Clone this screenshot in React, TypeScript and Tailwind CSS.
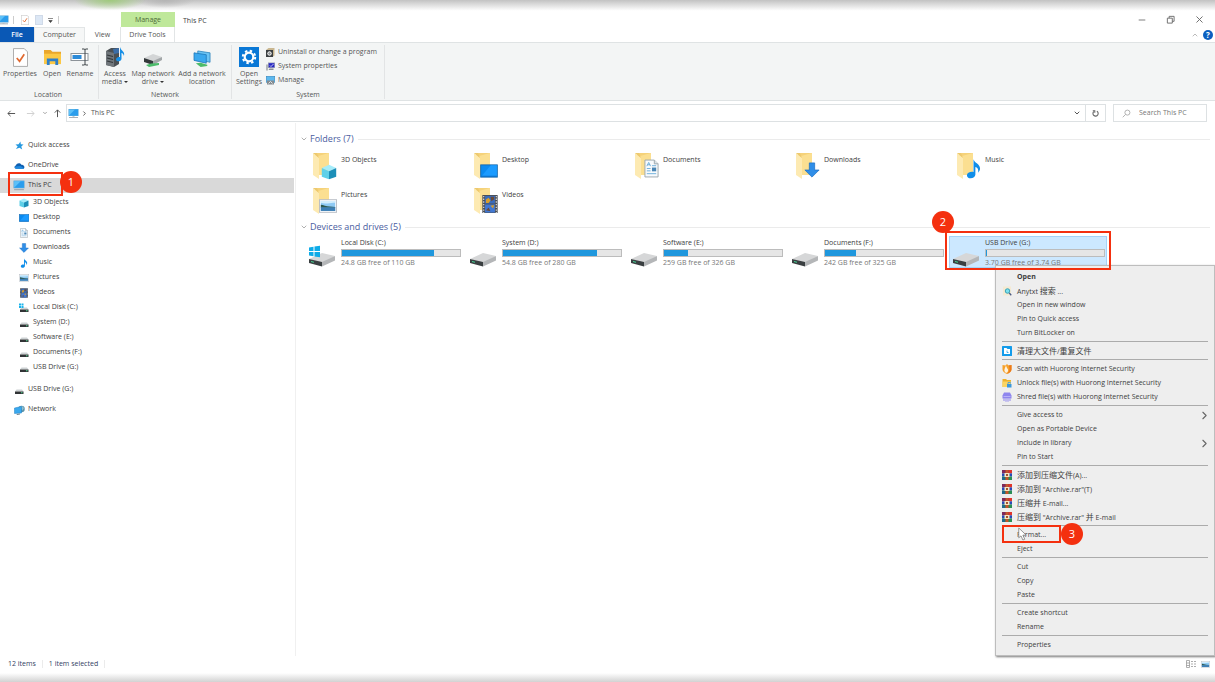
import type { ReactNode } from 'react';
import clsx from 'clsx';
import { ChevronDown, ChevronRight, ChevronUp, Minus, X } from 'lucide-react';

type IconName =
  | 'pc' | 'star' | 'cloud' | 'cube' | 'desktop' | 'document' | 'download' | 'music'
  | 'picture' | 'video' | 'osdrive' | 'drive' | 'network';

interface IconProps {
  className?: string;
}

function PcIcon({ className }: IconProps) {
  return (
    <svg viewBox="0 0 22 20" className={className} aria-hidden="true">
      <rect x="1" y="1" width="20" height="14" fill="#4b9fd6" />
      <rect x="2" y="2" width="18" height="12" fill="#5cc0f8" />
      <path d="M2 14 L14 2 H20 V14z" fill="#2b9dec" />
      <rect x="9" y="15" width="4" height="2" fill="#c3ccd2" />
      <rect x="2" y="17" width="18" height="1.500" fill="#8896a2" />
    </svg>
  );
}

function CubeIcon({ className }: IconProps) {
  return (
    <svg viewBox="0 0 20 20" className={className} aria-hidden="true">
      <path d="M10 1 19 5 10 9 1 5z" fill="#a5ecfa" />
      <path d="M1 5 10 9V19L1 16z" fill="#5fd0e8" />
      <path d="M19 5 10 9V19L19 16z" fill="#1c8fb8" />
    </svg>
  );
}

function DesktopIcon({ className }: IconProps) {
  return (
    <svg viewBox="0 0 20 16" className={className} aria-hidden="true">
      <rect x="0.5" y="1" width="19" height="14" fill="#0a8af0" stroke="#1767a8" />
      <path d="M1 14.500 12 1.500H19V14.500z" fill="#1b9bff" />
      <rect x="1" y="13.500" width="18" height="1" fill="#0b66ba" />
    </svg>
  );
}

function DocumentIcon({ className }: IconProps) {
  return (
    <svg viewBox="0 0 16 20" className={className} aria-hidden="true">
      <path d="M1 1H11L15 5V19H1z" fill="#f7fafc" stroke="#9ba6ad" />
      <path d="M11 1V5H15" fill="#dde4e8" stroke="#9ba6ad" />
      <path d="M3 7.500 5 3.500 7 7.500M3.800 6H6.500M8.500 7H13M3 10H7M3 12.500H7M3 15.500H13" stroke="#5ea6d8" strokeWidth="0.900" fill="none" />
      <rect x="8.500" y="9" width="4.500" height="4" fill="#4a86b5" />
    </svg>
  );
}

function DownloadIcon({ className }: IconProps) {
  return (
    <svg viewBox="0 0 18 18" className={className} aria-hidden="true">
      <path d="M6 1H12V9H17L9 17 1 9H6z" fill="#2f8ee8" stroke="#1a6fc4" strokeWidth="0.800" />
    </svg>
  );
}

function MusicIcon({ className }: IconProps) {
  return (
    <svg viewBox="0 0 16 22" className={className} aria-hidden="true">
      <path d="M8 1C9 5 15 6 15 11C15 13 14 14 13 15.500C13.500 11.500 12 10 10 9.500V17.500C10 20 7.500 21.500 5 21.500C2.500 21.500 1 20.300 1 18.200C1 15.500 4.500 14 8 14.600z" fill="#108ee9" />
    </svg>
  );
}

function PictureIcon({ className }: IconProps) {
  return (
    <svg viewBox="0 0 20 15" className={className} aria-hidden="true">
      <rect x="0.500" y="0.500" width="19" height="14" fill="#fafcff" stroke="#b5bbc2" />
      <rect x="2" y="2" width="16" height="11" fill="#8fcaf4" />
      <path d="M2 2H18V4C13 3 9 6 2 4z" fill="#d3eefc" />
      <path d="M2 6C5 6 8 8 12 8L18 8.500V9.500H2z" fill="#2e594e" />
      <rect x="2" y="9" width="16" height="4" fill="#3d7fb5" />
    </svg>
  );
}

function VideoIcon({ className }: IconProps) {
  return (
    <svg viewBox="0 0 17 20" className={className} aria-hidden="true">
      <rect width="17" height="20" fill="#4a4e54" />
      <path d="M1.500 1V20M15.500 1V20" stroke="#d9dde0" strokeWidth="1.300" strokeDasharray="1.500 1.500" />
      <rect x="3" y="1" width="11" height="8.500" fill="#3a6cbb" />
      <rect x="3" y="10.500" width="11" height="9" fill="#4278d2" />
      <path d="M4 5 7 3 9 6 7 9H4zM9 12 13 11 12 15z" fill="#d99e2a" />
      <path d="M9 2H13V5L10 7zM4 17 7 14 9 18z" fill="#6a4a38" />
    </svg>
  );
}

function DriveIcon({ className, windows }: IconProps & { windows?: boolean }) {
  return (
    <svg viewBox="0 0 28 22" className={className} aria-hidden="true">
      <path d="M1 14 14 8 27 11 14 18z" fill="#d6d7d8" />
      <path d="M1 14 14 17V21.500L1 18z" fill="#3a3f41" />
      <path d="M14 17 27 11V15.500L14 21.500z" fill="#b4b6b8" />
      <path d="M3 16 6 16.700V17.700L3 17z" fill="#42d392" />
      {windows && (
        <path d="M1 2.500 5.500 1.800V6H1zM6.500 1.600 12 .8V6H6.500zM1 7H5.500V11.200L1 10.500zM6.500 7H12V12.200L6.500 11.400z" fill="#0eabe8" />
      )}
    </svg>
  );
}

function SmallDriveIcon({ windows }: { windows?: boolean }) {
  return (
    <svg viewBox="0 0 20 20" className="size-[10px]" aria-hidden="true">
      <path d="M5 9H16L19 13H2z" fill="#cdd2d4" />
      <rect x="2" y="13" width="17" height="5" fill="#303335" />
      <rect x="14" y="14.500" width="3" height="2" fill="#4fd391" />
      {windows && <path d="M0 1H4V5H0zM5 1H9V5H5zM0 6H4V10H0zM5 6H9V10H5z" fill="#18b3ec" />}
    </svg>
  );
}

function NetworkIcon({ className }: IconProps) {
  return (
    <svg viewBox="0 0 22 20" className={className} aria-hidden="true">
      <circle cx="15" cy="8" r="6.500" fill="#5d93a8" />
      <path d="M11 4 16 2 20 6 17 11z" fill="#91bfcf" />
      <path d="M1 6 15 3V16L1 17z" fill="#3aa8ee" stroke="#1f7fc2" />
      <path d="M5 18 12 17V19L6 20z" fill="#6c7f8a" />
    </svg>
  );
}

function NavIcon({ name }: { name: IconName }) {
  switch (name) {
    case 'pc':
      return <PcIcon className="h-[11px] w-3" />;
    case 'star':
      return (
        <svg viewBox="0 0 20 20" className="size-[9px]" aria-hidden="true">
          <path d="M12 1 13 7 19 8 14 12 16 19 10 15 2 18 6 12 1 8 8 7z" fill="#2699e0" />
        </svg>
      );
    case 'cloud':
      return (
        <svg viewBox="0 0 24 16" className="h-[8px] w-[11px]" aria-hidden="true">
          <path d="M5 14C0 14 0 8 4 7C6 1 13 0 16 5C22 5 24 10 22 13C21 14 20 14 19 14z" fill="#0f5fb0" />
          <path d="M5 14C2 14 1 11 3 9L14 8 22 13C21 14 20 14 19 14z" fill="#1f8ae0" />
        </svg>
      );
    case 'cube':
      return <CubeIcon className="size-[10px]" />;
    case 'desktop':
      return <DesktopIcon className="h-2 w-[10px]" />;
    case 'document':
      return <DocumentIcon className="h-[10px] w-2" />;
    case 'download':
      return <DownloadIcon className="size-[10px]" />;
    case 'music':
      return <MusicIcon className="h-[10px] w-2" />;
    case 'picture':
      return <PictureIcon className="h-[8px] w-[10px]" />;
    case 'video':
      return <VideoIcon className="h-[10px] w-2" />;
    case 'osdrive':
      return <SmallDriveIcon windows />;
    case 'drive':
      return <SmallDriveIcon />;
    case 'network':
      return <NetworkIcon className="h-[10px] w-[11px]" />;
  }
}

function FolderIcon({ overlay }: { overlay: ReactNode }) {
  return (
    <span className="relative block h-7 w-6 shrink-0">
      <svg viewBox="0 0 24 28" className="h-7 w-6" aria-hidden="true">
        <path d="M3 1H17V23H5z" fill="#f5d27a" />
        <path d="M6 4 17 1V23H6z" fill="#fbdf91" />
        <path d="M1 1 7 6V27L1 23z" fill="#fdeab2" />
        <path d="M1 1H5L7 6z" fill="#edc96f" />
      </svg>
      <span className="absolute -right-px bottom-0 flex">{overlay}</span>
    </span>
  );
}

function Badge({ children, className }: { children: ReactNode; className: string }) {
  return (
    <span
      className={clsx(
        'absolute z-30 flex size-[22px] items-center justify-center rounded-full bg-[#f4300f] text-[11px] text-white',
        className,
      )}
    >
      {children}
    </span>
  );
}

function Highlight({ className }: { className: string }) {
  return <span className={clsx('pointer-events-none absolute z-20 border-2 border-[#f4300f]', className)} />;
}

const tree: { label: string; icon: IconName }[] = [
  { label: '3D Objects', icon: 'cube' },
  { label: 'Desktop', icon: 'desktop' },
  { label: 'Documents', icon: 'document' },
  { label: 'Downloads', icon: 'download' },
  { label: 'Music', icon: 'music' },
  { label: 'Pictures', icon: 'picture' },
  { label: 'Videos', icon: 'video' },
  { label: 'Local Disk (C:)', icon: 'osdrive' },
  { label: 'System (D:)', icon: 'drive' },
  { label: 'Software (E:)', icon: 'drive' },
  { label: 'Documents (F:)', icon: 'drive' },
  { label: 'USB Drive (G:)', icon: 'drive' },
];

const folders = [
  { name: '3D Objects', overlay: <CubeIcon className="size-4" /> },
  { name: 'Desktop', overlay: <DesktopIcon className="mb-[2px] h-[14px] w-[18px]" /> },
  { name: 'Documents', overlay: <DocumentIcon className="mb-[2px] h-[19px] w-[15px]" /> },
  { name: 'Downloads', overlay: <DownloadIcon className="mb-[2px] size-4" /> },
  { name: 'Music', overlay: <MusicIcon className="mb-[1px] h-[21px] w-[15px]" /> },
  { name: 'Pictures', overlay: <PictureIcon className="mb-[2px] h-[14px] w-[18px]" /> },
  { name: 'Videos', overlay: <VideoIcon className="mb-[2px] h-[18px] w-4" /> },
];

const drives = [
  { name: 'Local Disk (C:)', detail: '24.8 GB free of 110 GB', used: 78, windows: true },
  { name: 'System (D:)', detail: '54.8 GB free of 280 GB', used: 80 },
  { name: 'Software (E:)', detail: '259 GB free of 326 GB', used: 20 },
  { name: 'Documents (F:)', detail: '242 GB free of 325 GB', used: 26 },
  { name: 'USB Drive (G:)', detail: '3.70 GB free of 3.74 GB', used: 1, selected: true },
];

type MenuIconName = 'search' | 'clean' | 'scan' | 'unlock' | 'shred' | 'rar';

interface MenuItem {
  label: string;
  icon?: MenuIconName;
  bold?: boolean;
  submenu?: boolean;
  marked?: boolean;
}

const menuGroups: MenuItem[][] = [
  [
    { label: 'Open', bold: true },
    { label: 'Anytxt 搜索 ...', icon: 'search' },
    { label: 'Open in new window' },
    { label: 'Pin to Quick access' },
    { label: 'Turn BitLocker on' },
  ],
  [{ label: '清理大文件/重复文件', icon: 'clean' }],
  [
    { label: 'Scan with Huorong Internet Security', icon: 'scan' },
    { label: 'Unlock file(s) with Huorong Internet Security', icon: 'unlock' },
    { label: 'Shred file(s) with Huorong Internet Security', icon: 'shred' },
  ],
  [
    { label: 'Give access to', submenu: true },
    { label: 'Open as Portable Device' },
    { label: 'Include in library', submenu: true },
    { label: 'Pin to Start' },
  ],
  [
    { label: '添加到压缩文件(A)...', icon: 'rar' },
    { label: '添加到 "Archive.rar"(T)', icon: 'rar' },
    { label: '压缩并 E-mail...', icon: 'rar' },
    { label: '压缩到 "Archive.rar" 并 E-mail', icon: 'rar' },
  ],
  [{ label: 'Format...', marked: true }, { label: 'Eject' }],
  [{ label: 'Cut' }, { label: 'Copy' }, { label: 'Paste' }],
  [{ label: 'Create shortcut' }, { label: 'Rename' }],
  [{ label: 'Properties' }],
];

function MenuIcon({ name }: { name: MenuIconName }) {
  return (
    <svg viewBox="0 0 20 20" className="size-[10px]" aria-hidden="true">
      {name === 'search' && (
        <>
          <path d="M2 1H18V19H2z" fill="#f5ead2" />
          <circle cx="11" cy="10" r="4.500" fill="#7be0ee" stroke="#3aa3b8" strokeWidth="2" />
          <path d="M14.500 14 18.500 18.500" stroke="#4a5a86" strokeWidth="2.500" />
        </>
      )}
      {name === 'clean' && (
        <>
          <rect width="20" height="20" rx="1" fill="#139bea" />
          <path d="M4 4H9L11 6H16V16H4z" fill="#fff" />
          <path d="M10 9V13H13" stroke="#139bea" strokeWidth="1.500" fill="none" />
        </>
      )}
      {name === 'scan' && (
        <>
          <path d="M1 2 7 3 10 0 13 3 19 2V11C19 15 14 18 10 20C6 18 1 15 1 11z" fill="#f5a12b" />
          <path d="M13 3 19 2V11C19 15 14 18 10 20C16 14 16 8 13 3z" fill="#ec7a1c" />
          <path d="M8 18C2 13 6 9 8 3C9 7 11 9 12 11C13 14 11 17 8 18z" fill="#fff3df" />
        </>
      )}
      {name === 'unlock' && (
        <>
          <path d="M1 2H8L10 4H18V18H1z" fill="#eeb22c" />
          <path d="M1 7H18V18H1z" fill="#fbd462" />
          <rect x="10" y="12" width="9" height="7" fill="#3a97dc" />
          <path d="M12 12V9H17V11" stroke="#3a97dc" strokeWidth="1.500" fill="none" />
        </>
      )}
      {name === 'shred' && (
        <>
          <path d="M4 1H16L19 7V13H1V7z" fill="#8f86ee" />
          <path d="M4 13V18M8 13V19.500M12 13V19.500M16 13V18" stroke="#8f86ee" strokeWidth="2" />
          <path d="M3 9H17" stroke="#c5c0fa" strokeWidth="1.500" />
        </>
      )}
      {name === 'rar' && (
        <>
          <rect width="20" height="7" fill="#7e2a5a" />
          <rect y="7" width="20" height="6" fill="#2749b8" />
          <rect y="13" width="20" height="7" fill="#2a8f55" />
          <path d="M13 0H20V6H13z" fill="#e0352b" />
          <path d="M0 14H6V20H0z" fill="#1f6a8c" />
          <rect x="7" width="6" height="20" fill="#c4552d" />
          <rect x="5" y="6" width="10" height="8" fill="#f6e6c4" />
          <rect x="8" y="8" width="4" height="4" fill="#a3562f" />
        </>
      )}
    </svg>
  );
}

// Han characters run one size larger than the Latin text around them
function MenuLabel({ text }: { text: string }) {
  return (
    <span>
      {text.split(/([\u4e00-\u9fff]+)/).map((part, i) =>
        i % 2 ? (
          <span key={i} className="text-[8px]">
            {part}
          </span>
        ) : (
          part
        ),
      )}
    </span>
  );
}

function ContextMenu() {
  return (
    <div
      role="menu"
      className="absolute top-[265px] right-0 z-10 w-[220px] border border-[#bdbdbd] bg-[#eeeeee] pt-[4px] pb-[3px] shadow-[1px_1px_2px_#777777]"
    >
      {menuGroups.map((group, g) => (
        <div key={g}>
          {g > 0 && <div role="separator" className="mt-px mr-[6px] mb-[2px] ml-[6px] h-px bg-[#ababab]" />}
          {group.map((item) => (
            <button
              key={item.label}
              type="button"
              role="menuitem"
              className={clsx(
                'relative flex h-[14px] w-full items-center pr-[6px] pl-[6px] text-left leading-[14px]',
                item.bold && 'font-bold',
              )}
            >
              <span className="flex w-[15px] shrink-0">{item.icon && <MenuIcon name={item.icon} />}</span>
              <MenuLabel text={item.label} />
              {item.submenu && <ChevronRight className="-mr-[3px] ml-auto size-[13px] text-[#666666]" strokeWidth={2} />}
              {item.marked && (
                <>
                  <Highlight className="-top-[3px] left-[6px] h-[18px] w-[59px]" />
                  <Badge className="-top-[5px] left-[65px]">3</Badge>
                  <svg viewBox="0 0 12 18" className="absolute -top-px left-[22px] h-[14px] w-[9px]" aria-hidden="true">
                    <path d="M1 1V14L4 11.500 6.500 17 9 16 6.500 10.500H11z" fill="#fff" stroke="#777" />
                  </svg>
                </>
              )}
            </button>
          ))}
        </div>
      ))}
    </div>
  );
}

function BigButton({ icon, children, className }: { icon: ReactNode; children: ReactNode; className: string }) {
  return (
    <button type="button" className={clsx('flex flex-col items-center text-center leading-2', className)}>
      <span className="mb-px flex h-6 items-center justify-center">{icon}</span>
      <span className="whitespace-nowrap">{children}</span>
    </button>
  );
}

function RibbonGroup({ label, className, children }: { label: string; className: string; children: ReactNode }) {
  return (
    <div className={clsx('flex flex-col justify-between border-r border-[#e2e4e5]', className)}>
      <div className="flex items-start">{children}</div>
      <div className="text-center leading-[8px]">{label}</div>
    </div>
  );
}

function Caret() {
  return <span className="ml-[2px] inline-block border-x-2 border-t-2 border-x-transparent border-t-[#333333] align-middle" />;
}

function CheckDocIcon({ className }: IconProps) {
  return (
    <svg viewBox="0 0 16 20" className={className} aria-hidden="true">
      <path d="M.5.5H12L15.500 4V19.500H.5z" fill="#fff" stroke="#a8a8a8" />
      <path d="M4 10.500 7 14 12 6.500" fill="none" stroke="#e0692f" strokeWidth="1.800" />
    </svg>
  );
}

function Ribbon() {
  return (
    <div className="flex h-[59px] border-y border-[#dfe3e4] bg-[#f3f5f5] pt-[2px] pb-px text-[#555555]">
      <RibbonGroup label="Location" className="w-[99px] pr-[2px]">
        <BigButton className="w-10" icon={<CheckDocIcon className="h-[19px] w-[15px]" />}>
          Properties
        </BigButton>
        <BigButton
          className="w-6"
          icon={
            <svg viewBox="0 0 20 18" className="h-[17px] w-[19px]" aria-hidden="true">
              <path d="M1 1H8L10 3H19V16H1z" fill="#eaa72c" />
              <path d="M1 5H19V16H1z" fill="#fcc844" />
              <path d="M4 17V10H16V17H13V13H7V17z" fill="#2f7fc9" />
            </svg>
          }
        >
          Open
        </BigButton>
        <BigButton
          className="w-8"
          icon={
            <svg viewBox="0 0 20 18" className="h-[18px] w-5" aria-hidden="true">
              <rect x="1" y="5.500" width="17" height="7" fill="#fff" stroke="#8c9399" />
              <rect x="2.500" y="7" width="9" height="4" fill="#2b8ad8" />
              <path d="M12 1H14Q15 1 15 2V16Q15 17 14 17H12M18 1H16Q15 1 15 2M18 17H16Q15 17 15 16" fill="none" stroke="#40464a" />
            </svg>
          }
        >
          Rename
        </BigButton>
      </RibbonGroup>
      <RibbonGroup label="Network" className="w-[133px]">
        <BigButton
          className="w-8"
          icon={
            <svg viewBox="0 0 20 20" className="size-5" aria-hidden="true">
              <path d="M1 4 6 1H14V17L9 20 1 18z" fill="#4b5054" />
              <path d="M1 4 9 6V20L1 18z" fill="#70767b" />
              <path d="M8 2 14 1V6L9 7z" fill="#3c6ea8" />
              <path d="M2 8 8 9.500M2 11 8 12.500M2 14 8 15.500" stroke="#33383b" strokeWidth="1.200" />
              <path d="M15 0C16 4 20 4 19 9C18 6 17 6 16.500 6V12C16 15 11 15 11 12.500C11 10.500 13 10 15 10z" fill="#168fe6" />
            </svg>
          }
        >
          Access
          <br />
          media
          <Caret />
        </BigButton>
        <BigButton
          className="w-11"
          icon={
            <svg viewBox="0 0 20 14" className="mt-[6px] h-[14px] w-5" aria-hidden="true">
              <path d="M1 5 10 1 19 4 10 9z" fill="#d3d5d6" />
              <path d="M1 5 10 8V12L1 9z" fill="#34393b" />
              <path d="M10 8 19 4V7L10 12z" fill="#a2a6a8" />
              <path d="M3 12 8 10.500 16 10V12L6 14z" fill="#4cbb6a" />
            </svg>
          }
        >
          Map network
          <br />
          drive
          <Caret />
        </BigButton>
        <BigButton
          className="w-[54px]"
          icon={
            <svg viewBox="0 0 20 18" className="mt-[3px] h-[17px] w-[19px]" aria-hidden="true">
              <path d="M5 1 18 3V13L5 10z" fill="#6cc4f4" stroke="#277fb8" strokeWidth="0.800" />
              <path d="M1 3 14 5V14L1 11z" fill="#3aa8ee" stroke="#1b74b5" strokeWidth="0.800" />
              <path d="M3 14 8 13.500 15 15.500V17L8 18z" fill="#4cbb6a" />
            </svg>
          }
        >
          Add a network
          <br />
          location
        </BigButton>
      </RibbonGroup>
      <RibbonGroup label="System" className="w-[153px]">
        <BigButton
          className="w-[34px]"
          icon={
            <svg viewBox="0 0 20 20" className="size-5" aria-hidden="true">
              <rect width="20" height="20" fill="#0a78d6" />
              <circle cx="10" cy="10" r="4.300" fill="none" stroke="#fff" strokeWidth="2.200" />
              <circle cx="10" cy="10" r="6.200" fill="none" stroke="#fff" strokeWidth="2" strokeDasharray="2.435 2.435" />
            </svg>
          }
        >
          Open
          <br />
          Settings
        </BigButton>
        <div className="flex flex-col">
          <button type="button" className="flex h-[14px] items-center gap-[3px]">
            <svg viewBox="0 0 18 18" className="size-[9px]" aria-hidden="true">
              <path d="M0 4 5 0H17V15L13 18H0z" fill="#c9b791" />
              <rect y="4" width="14" height="14" fill="#3b3f42" />
              <circle cx="7" cy="11" r="3.500" fill="#8a8f92" stroke="#fff" strokeWidth="2" />
            </svg>
            Uninstall or change a program
          </button>
          <button type="button" className="flex h-[14px] items-center gap-[3px]">
            <svg viewBox="0 0 18 18" className="size-[9px]" aria-hidden="true">
              <rect x="0" y="5" width="4" height="12" fill="#b2b6ba" />
              <rect x="4" y="1" width="14" height="11" fill="#9a9fb8" />
              <rect x="5.500" y="2.500" width="11" height="8" fill="#2626c4" />
              <path d="M8 7 10 9 15 4" stroke="#fff" strokeWidth="1.500" fill="none" />
              <path d="M7 13H15V16H5z" fill="#8b9095" />
            </svg>
            System properties
          </button>
          <button type="button" className="flex h-[14px] items-center gap-[3px]">
            <svg viewBox="0 0 18 18" className="size-[9px]" aria-hidden="true">
              <rect x="0.500" y="0.500" width="17" height="12" fill="#5cb8ee" stroke="#2c7fb5" />
              <rect x="2" y="9" width="14" height="8" fill="#858c91" />
              <path d="M5 15 9 11 13 15" stroke="#fff" strokeWidth="1.500" fill="none" />
            </svg>
            Manage
          </button>
        </div>
      </RibbonGroup>
    </div>
  );
}

function TitleBar() {
  return (
    <header className="flex justify-between">
      <div className="flex flex-col">
        <div className="flex h-[15px]">
          <div className="flex w-[121px] items-center pt-px">
            <PcIcon className="-ml-[2px] h-[10px] w-[11px]" />
            <span className="ml-[4px] h-2 w-px bg-[#cccccc]" />
            <CheckDocIcon className="ml-[7px] h-[10px] w-2" />
            <span className="ml-[6px] h-[10px] w-2 border border-[#d0dae8] bg-[#dce7f5]" />
            <svg viewBox="0 0 6 6" className="ml-[5px] size-[5px]" aria-hidden="true">
              <path d="M0 .5H6M1 3H5L3 5.500z" stroke="#444" strokeWidth="0.800" fill="#444" />
            </svg>
            <span className="ml-[5px] h-2 w-px bg-[#cccccc]" />
          </div>
          <div className="w-[54px] bg-[#bfe89a] text-center leading-[15px] text-[#4c6a37]">Manage</div>
          <h1 className="ml-[8px] leading-[17px]">This PC</h1>
        </div>
        <nav className="flex h-[15px] leading-[15px] text-[#555555]">
          <button type="button" className="w-[34px] bg-[#0a58b5] font-semibold text-white">
            File
          </button>
          <button type="button" className="w-[51px] border-x border-t border-[#e2e5e6] bg-[#f6f7f7] leading-[14px]">
            Computer
          </button>
          <button type="button" className="w-[35px]">
            View
          </button>
          <button type="button" className="w-[55px] border-x border-[#e2e5e6]">
            Drive Tools
          </button>
        </nav>
      </div>
      <div className="flex flex-col items-end justify-between">
        <div className="flex items-center gap-[19px] pt-[2px] pr-[10px] text-[#666666]">
          <button type="button" aria-label="Minimize">
            <Minus className="size-[10px]" strokeWidth={2} />
          </button>
          <button type="button" aria-label="Restore">
            <svg viewBox="0 0 10 10" className="size-[9px]" fill="none" stroke="#666" aria-hidden="true">
              <path d="M1.500 3.500H7V9H1.500zM3.500 3.500V1.500H9V7H7" />
            </svg>
          </button>
          <button type="button" aria-label="Close">
            <X className="size-[11px]" strokeWidth={2} />
          </button>
        </div>
        <div className="mb-[2px] flex items-center gap-1 pr-[2px]">
          <ChevronUp className="size-2 text-[#999999]" />
          <button
            type="button"
            aria-label="Help"
            className="flex size-[10px] items-center justify-center rounded-full bg-[#0b5fc0] text-[8px] font-bold text-white"
          >
            ?
          </button>
        </div>
      </div>
    </header>
  );
}

function NavArrow({ label, path, className }: { label: string; path: string; className?: string }) {
  return (
    <button type="button" aria-label={label} className={className}>
      <svg viewBox="0 0 10 10" className="size-[9px]" fill="none" stroke="currentColor" strokeWidth="1.100" aria-hidden="true">
        <path d={path} />
      </svg>
    </button>
  );
}

function AddressBar() {
  return (
    <div className="flex h-[18px] items-center pr-2 text-[#555555]">
      <div className="flex w-[66px] items-center pl-[7px]">
        <NavArrow label="Back" path="M9 5H1M4 2 1 5 4 8" />
        <NavArrow label="Forward" path="M1 5H9M6 2 9 5 6 8" className="ml-[10px] text-[#d0d0d0]" />
        <ChevronDown className="ml-[7px] size-[6px] text-[#888888]" strokeWidth={3} />
        <NavArrow label="Up" path="M5 9V1M2 4 5 1 8 4" className="ml-[5px]" />
      </div>
      <div className="flex h-full flex-1 items-center border border-[#dde1e3] pl-px">
        <PcIcon className="h-[11px] w-[11px]" />
        <ChevronRight className="ml-[2px] size-[7px]" strokeWidth={3} />
        <span className="ml-[3px]">This PC</span>
        <ChevronDown className="mr-[4px] ml-auto size-[8px]" strokeWidth={3} />
        <button type="button" aria-label="Refresh" className="flex h-full w-5 items-center justify-center border-l border-[#dde1e3]">
          <svg viewBox="0 0 10 10" className="size-[9px]" fill="none" stroke="#666" strokeWidth="1.200" aria-hidden="true">
            <path d="M6.500 2.500A2.900 2.900 0 1 1 3 3M2 2H4.200V4.200" />
          </svg>
        </button>
      </div>
      <label className="ml-[7px] flex h-full w-[94px] items-center border border-[#dde1e3] pl-2">
        <svg viewBox="0 0 10 10" className="size-[9px] shrink-0" fill="none" stroke="#aaa" aria-hidden="true">
          <circle cx="6" cy="4" r="2.800" />
          <path d="M4 6 .8 9.200" />
        </svg>
        <input
          type="text"
          aria-label="Search This PC"
          placeholder="Search This PC"
          className="ml-2 w-full min-w-0 bg-transparent outline-none placeholder:text-[#777777]"
        />
      </label>
    </div>
  );
}

function NavRow({ label, icon, className, children }: { label: string; icon: IconName; className?: string; children?: ReactNode }) {
  return (
    <a href="#" className={clsx('relative flex h-[15px] items-center', className)}>
      <span className="mr-[3px] flex w-3 justify-center">
        <NavIcon name={icon} />
      </span>
      {label}
      {children}
    </a>
  );
}

function Sidebar() {
  return (
    <aside className="w-[296px] shrink-0 border-r border-[#f0f0f0] pt-[15px] pr-px">
      <NavRow label="Quick access" icon="star" className="pl-[13px]" />
      <NavRow label="OneDrive" icon="cloud" className="mt-[5px] pl-[13px]" />
      <NavRow label="This PC" icon="pc" className="mt-[5px] bg-[#d9d9d9] pl-[13px]">
        <Highlight className="-top-[6px] left-2 h-6 w-[55px]" />
        <Badge className="-top-[7px] left-[60px]">1</Badge>
      </NavRow>
      <div className="py-[2px]">
        {tree.map((item) => (
          <NavRow key={item.label} label={item.label} icon={item.icon} className="pl-[18px]" />
        ))}
      </div>
      <NavRow label="USB Drive (G:)" icon="drive" className="mt-[5px] pl-[13px]" />
      <NavRow label="Network" icon="network" className="mt-[5px] pl-[13px]" />
    </aside>
  );
}

function SectionHeading({ children }: { children: ReactNode }) {
  return (
    <h2 className="flex h-[14px] items-center pr-[5px] pl-[4px] text-[9px] leading-[14px] text-[#4a5ca0]">
      <ChevronDown className="mr-[2px] size-2 text-[#888888]" />
      {children}
      <span className="ml-1 h-px flex-1 bg-[#ebebeb]" />
    </h2>
  );
}

function Content() {
  return (
    <main className="flex-1 pt-[9px]">
      <SectionHeading>Folders (7)</SectionHeading>
      <div className="grid grid-cols-[repeat(auto-fill,158px)] gap-x-[3px] pt-[4px] pl-[9px]">
        {folders.map((folder) => (
          <div key={folder.name} className="flex h-[35px] pt-[2px] pl-[7px]">
            <FolderIcon overlay={folder.overlay} />
            <span className="ml-[5px] pt-[3px] leading-[10px]">{folder.name}</span>
          </div>
        ))}
      </div>
      <SectionHeading>Devices and drives (5)</SectionHeading>
      <div className="grid grid-cols-[repeat(auto-fill,158px)] gap-x-[3px] pt-[2px] pl-[9px]">
        {drives.map((drive) => (
          <div
            key={drive.name}
            className={clsx(
              'relative flex h-8 border pl-[2px]',
              drive.selected ? 'border-[#a5d3f8] bg-[#cce8ff]' : 'border-transparent',
            )}
          >
            <DriveIcon windows={drive.windows} className="mt-2 h-[22px] w-7 shrink-0" />
            <div className="ml-[5px] w-[120px]">
              <div className="leading-[12px]">{drive.name}</div>
              <div className="h-2 border border-[#bcbcbc] bg-[#e6e6e6]">
                <div className="h-full bg-[#1f97dd]" style={{ width: `${drive.used}%` }} />
              </div>
              <div className="leading-[11px] text-[#777777]">{drive.detail}</div>
            </div>
            {drive.selected && (
              <>
                <Highlight className="-top-[6px] -left-[5px] h-[39px] w-[166px]" />
                <Badge className="-top-[26px] -left-[18px]">2</Badge>
              </>
            )}
          </div>
        ))}
      </div>
    </main>
  );
}

function StatusBar() {
  return (
    <footer className="flex h-4 items-center pr-[5px] pl-2 text-[#33415f]">
      <span>12 items</span>
      <span className="mx-[6px] h-2 w-px bg-[#ebebeb]" />
      <span>1 item selected</span>
      <span className="ml-[6px] h-2 w-px bg-[#ebebeb]" />
      <div className="ml-auto flex items-center gap-1">
        <button type="button" aria-label="Details view">
          <svg viewBox="0 0 11 8" className="h-2 w-[11px]" aria-hidden="true">
            <path d="M.5.5H3.500V7.500H.5zM.5 3H3.500M.5 5.500H3.500M5 1.500H7M8 1.500H10M5 4H7M8 4H10M5 6.500H7M8 6.500H10" stroke="#999" strokeWidth="0.800" fill="none" />
          </svg>
        </button>
        <button type="button" aria-label="Large icons view">
          <PictureIcon className="h-[7px] w-[9px]" />
        </button>
      </div>
    </footer>
  );
}

export default function App() {
  return (
    <div className="relative flex min-h-screen flex-col overflow-hidden bg-white font-['Open_Sans','Noto_Sans_CJK_SC',sans-serif] text-[7px] text-[#3d3d3d]">
      <div className="h-3 bg-[radial-gradient(ellipse_36px_10px_at_110px_0px,#9fca7c,transparent),radial-gradient(ellipse_30px_8px_at_165px_0px,#b4b4b4,transparent),linear-gradient(#c2c2c2,#ffffff_90%)]" />
      <TitleBar />
      <Ribbon />
      <div className="pt-[3px]">
        <AddressBar />
      </div>
      <div className="flex flex-1 pt-px">
        <Sidebar />
        <Content />
      </div>
      <StatusBar />
      <div className="h-[10px] bg-[linear-gradient(#ffffff_10%,#d2d2d2)]" />
      <ContextMenu />
    </div>
  );
}
